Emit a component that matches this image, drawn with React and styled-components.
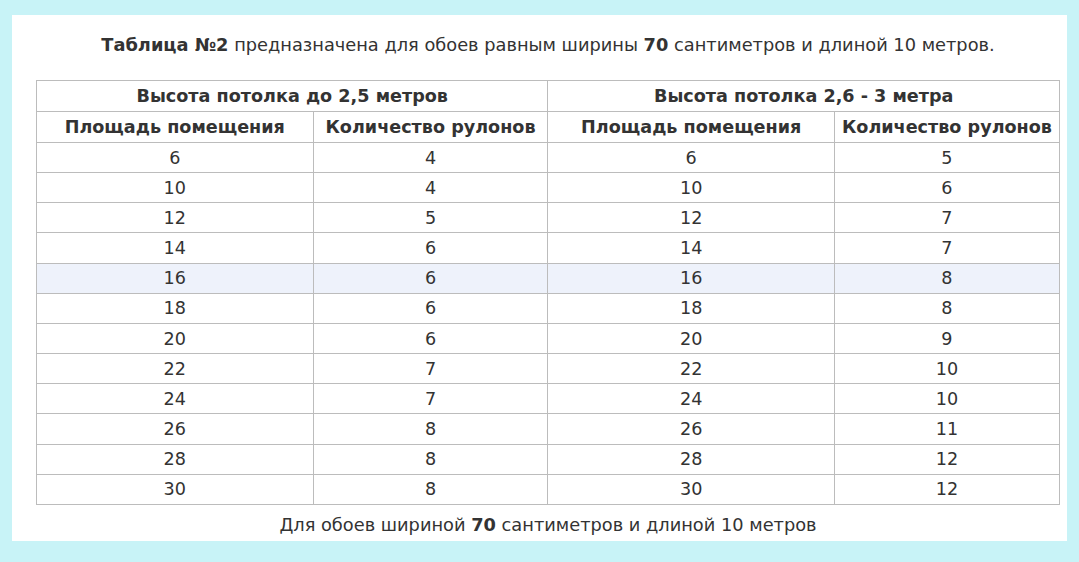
import React from 'react';
import styled, { createGlobalStyle } from 'styled-components';

const GlobalStyle = createGlobalStyle`
  html, body {
    margin: 0;
    padding: 0;
    background: #c8f3f7;
  }
  body {
    font-family: "DejaVu Sans", Verdana, sans-serif;
    color: #333;
  }
`;

const Page = styled.div`
  padding: 15px 12px 0 12px;
  height: 562px;
  box-sizing: border-box;
`;

const Panel = styled.div`
  background: #fff;
  width: 1055px;
  box-sizing: border-box;
  padding: 0 7px 0 24px;
  height: 526px;
`;

const Title = styled.p`
  margin: 0;
  padding: 19px 0 0;
  height: 65px;
  box-sizing: border-box;
  text-align: center;
  font-size: 17.8px;
  line-height: 22px;
`;

const Table = styled.table`
  width: 1024px;
  border-collapse: collapse;
  font-size: 17.6px;
  color: #333;
`;

const Th = styled.th`
  border: 1px solid #bcbcbc;
  height: 30px;
  padding: 0;
  font-weight: bold;
  text-align: center;
  width: ${p => p.$w || 'auto'};
`;

const Td = styled.td`
  border: 1px solid #bcbcbc;
  height: 29.17px;
  padding: 0;
  text-align: center;
`;

const Row = styled.tr`
  background: ${p => (p.$hl ? '#eef2fb' : '#fff')};
`;

const Caption = styled.p`
  margin: 0;
  padding-top: 10px;
  text-align: center;
  font-size: 17.8px;
  line-height: 20px;
`;

const rows = [
  [6, 4, 6, 5],
  [10, 4, 10, 6],
  [12, 5, 12, 7],
  [14, 6, 14, 7],
  [16, 6, 16, 8],
  [18, 6, 18, 8],
  [20, 6, 20, 9],
  [22, 7, 22, 10],
  [24, 7, 24, 10],
  [26, 8, 26, 11],
  [28, 8, 28, 12],
  [30, 8, 30, 12],
];

export default function App() {
  return (
    <>
      <GlobalStyle />
      <Page>
        <Panel>
          <Title>
            <b>Таблица №2</b> предназначена для обоев равным ширины <b>70</b> сантиметров и длиной 10 метров.
          </Title>
          <Table>
            <thead>
              <tr>
                <Th colSpan={2}>Высота потолка до 2,5 метров</Th>
                <Th colSpan={2}>Высота потолка 2,6 - 3 метра</Th>
              </tr>
              <tr>
                <Th $w="277px">Площадь помещения</Th>
                <Th $w="235px">Количество рулонов</Th>
                <Th $w="287px">Площадь помещения</Th>
                <Th $w="225px">Количество рулонов</Th>
              </tr>
            </thead>
            <tbody>
              {rows.map((r, i) => (
                <Row key={i} $hl={r[0] === 16}>
                  {r.map((v, j) => (
                    <Td key={j}>{v}</Td>
                  ))}
                </Row>
              ))}
            </tbody>
          </Table>
          <Caption>
            Для обоев шириной <b>70</b> сантиметров и длиной 10 метров
          </Caption>
        </Panel>
      </Page>
    </>
  );
}
